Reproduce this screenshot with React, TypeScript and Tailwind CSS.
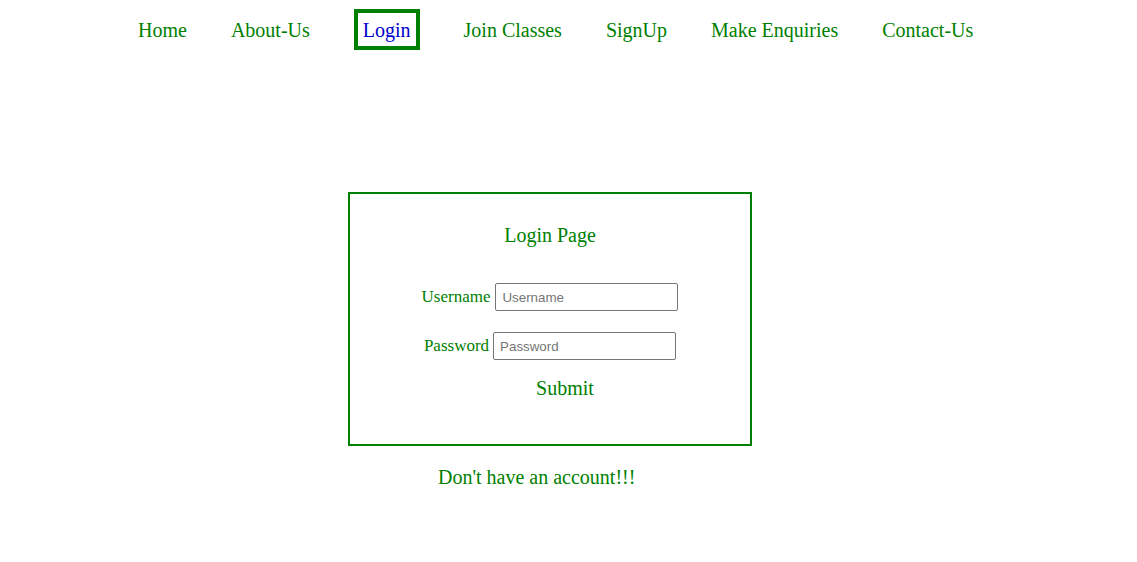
import React from "react";

export default function App() {
  const items = ["Home", "About-Us", "Login", "Join Classes", "SignUp", "Make Enquiries", "Contact-Us"];
  return (
    <div className="min-h-[562px] w-[1137px] bg-white text-[#008000]" style={{ fontFamily: '"Liberation Serif", "Times New Roman", serif' }}>
      <nav className="flex items-baseline gap-[44px] pl-[138px] pt-[9px] text-[20px] leading-[23px]">
        {items.map((it, i) =>
          it === "Login" ? (
            <span key={i} className="border-[4px] border-[#008000] px-[5px] pb-[4px] pt-[6px] text-[#0000cd]">
              {it}
            </span>
          ) : (
            <span key={i}>{it}</span>
          )
        )}
      </nav>

      <div className="ml-[348px] mt-[142px] h-[254px] w-[404px] border-2 border-[#008000]">
        <div className="pt-[30px] text-center text-[20px] leading-[23px]">Login Page</div>
        <div className="mt-[36px] flex items-center justify-center gap-[5px] text-[17px] leading-[20px]">
          <label>Username</label>
          <input
            placeholder="Username"
            className="h-[28px] w-[183px] rounded-[2px] border border-[#767676] bg-white px-[6px] text-[13.33px] text-black outline-none placeholder:text-[#757575]"
            style={{ fontFamily: '"Liberation Sans", Arial, sans-serif' }}
          />
        </div>
        <div className="mt-[21px] flex items-center justify-center gap-[4px] text-[17px] leading-[20px]">
          <label>Password</label>
          <input
            placeholder="Password"
            className="h-[28px] w-[183px] rounded-[2px] border border-[#767676] bg-white px-[6px] text-[13.33px] text-black outline-none placeholder:text-[#757575]"
            style={{ fontFamily: '"Liberation Sans", Arial, sans-serif' }}
          />
        </div>
        <div className="mt-[17px] flex justify-center pl-[30px] text-[20px] leading-[23px]">
          <span>Submit</span>
        </div>
      </div>

      <div className="ml-[438px] mt-[20px] text-[20px] leading-[23px]">Don't have an account!!!</div>
    </div>
  );
}
